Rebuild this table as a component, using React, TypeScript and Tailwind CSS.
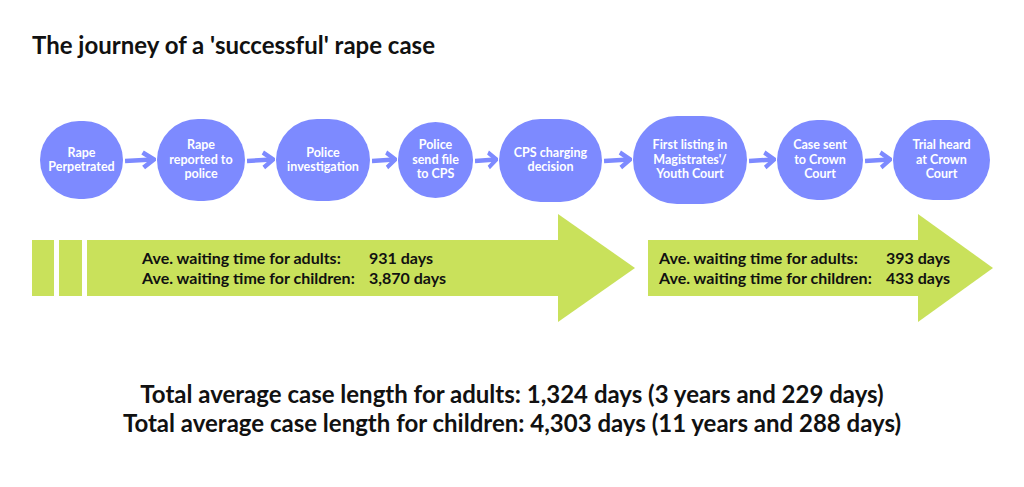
import React from "react";

const circles = [
  { w: 83, h: 78, lines: ["Rape", "Perpetrated"] },
  { w: 88, h: 82, lines: ["Rape", "reported to", "police"] },
  { w: 94, h: 82, lines: ["Police", "investigation"] },
  { w: 75, h: 76, lines: ["Police", "send file", "to CPS"] },
  { w: 103, h: 83, lines: ["CPS charging", "decision"] },
  { w: 114, h: 88, lines: ["First listing in", "Magistrates'/", "Youth Court"] },
  { w: 86, h: 80, lines: ["Case sent", "to Crown", "Court"] },
  { w: 97, h: 80, lines: ["Trial heard", "at Crown", "Court"] },
];
const gaps = [34, 31, 28, 26, 31, 30, 30];

function SmallArrow({ w }: { w: number }) {
  return (
    <div className="flex items-center justify-center shrink-0" style={{ width: w }}>
      <svg width={w - 3} height="20" viewBox="0 0 30 20" preserveAspectRatio="none">
        <path d="M0 11 L27 9.5" stroke="#7d8aff" strokeWidth="4.5" fill="none" />
        <path d="M17 2.5 L28 9.5 L18 17.5" stroke="#7d8aff" strokeWidth="4.5" fill="none" strokeLinejoin="miter" />
      </svg>
    </div>
  );
}

function BigArrow({ bodyW, headW, pl, l1, v1, l2, v2 }: { bodyW: number; headW: number; pl: number; l1: string; v1: string; l2: string; v2: string }) {
  return (
    <div className="flex items-center shrink-0">
      <div className="h-[56px] bg-[#c9e15b] flex items-center shrink-0 overflow-visible" style={{ width: bodyW, paddingLeft: pl }}>
        <div className="relative z-10 grid grid-cols-[227px_auto] text-[16px] leading-[20px] font-bold text-[#111] whitespace-nowrap">
          <span>{l1}</span>
          <span>{v1}</span>
          <span>{l2}</span>
          <span>{v2}</span>
        </div>
      </div>
      <svg width={headW} height="108" viewBox={`0 0 ${headW} 108`} className="shrink-0 block">
        <polygon points={`0,0 ${headW},54 0,108`} fill="#c9e15b" />
      </svg>
    </div>
  );
}

export default function App() {
  return (
    <div className="w-[1024px] h-[487px] bg-white overflow-hidden font-['Lato','Liberation_Sans',sans-serif]">
      <h1 className="pt-[31px] pl-[32px] text-[24px] leading-[28px] font-bold text-[#111]">
        The journey of a 'successful' rape case
      </h1>

      <div className="mt-[56px] h-[90px] pl-[40px] flex items-center">
        {circles.map((c, i) => (
          <React.Fragment key={i}>
            <div
              className="rounded-full bg-[#7d8aff] flex flex-col items-center justify-center shrink-0 text-white font-bold text-[12.5px] leading-[14.5px] text-center"
              style={{ width: c.w, height: c.h }}
            >
              {c.lines.map((l, j) => (
                <span key={j} className="whitespace-nowrap">{l}</span>
              ))}
            </div>
            {i < gaps.length && <SmallArrow w={gaps[i]} />}
          </React.Fragment>
        ))}
      </div>

      <div className="mt-[9px] h-[108px] pl-[32px] flex items-center">
        <div className="w-[22px] h-[56px] bg-[#c9e15b] shrink-0" />
        <div className="ml-[5px] w-[23px] h-[56px] bg-[#c9e15b] shrink-0" />
        <div className="ml-[5px]">
          <BigArrow bodyW={471} headW={77} pl={55} l1="Ave. waiting time for adults:" v1="931 days" l2="Ave. waiting time for children:" v2="3,870 days" />
        </div>
        <div className="ml-[13px]">
          <BigArrow bodyW={270} headW={75} pl={11} l1="Ave. waiting time for adults:" v1="393 days" l2="Ave. waiting time for children:" v2="433 days" />
        </div>
      </div>

      <div className="mt-[57px] flex flex-col items-center text-[24px] leading-[29px] font-bold text-[#111]">
        <span className="whitespace-nowrap">Total average case length for adults: 1,324 days (3 years and 229 days)</span>
        <span className="whitespace-nowrap">Total average case length for children: 4,303 days (11 years and 288 days)</span>
      </div>
    </div>
  );
}
